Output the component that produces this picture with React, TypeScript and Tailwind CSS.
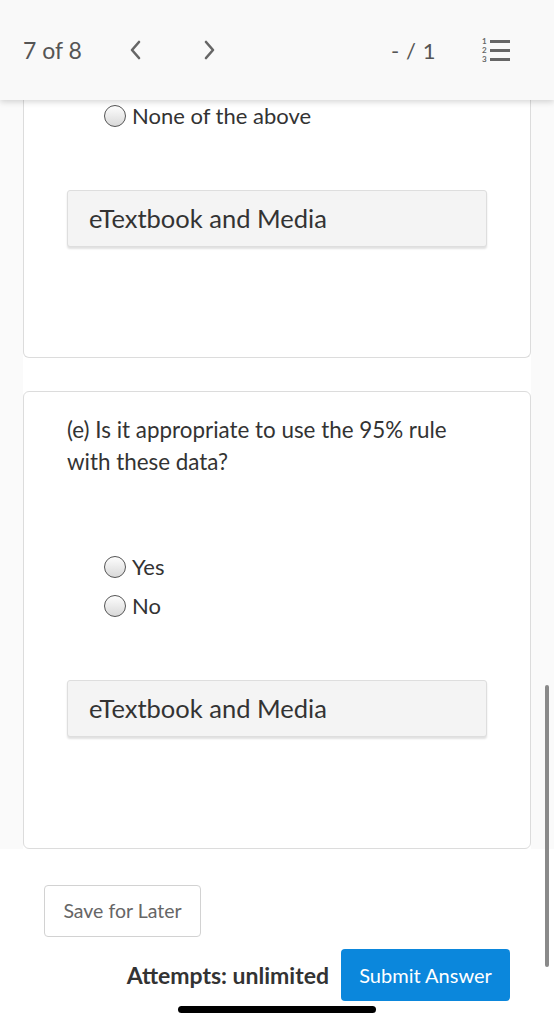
import React from "react";

function Radio({label}: {label: string}) {
    return (
        <label className="flex items-center gap-x-[6px] h-[24px]">
            <span className="w-[22px] h-[22px] rounded-full border-[1.5px] border-[#555] bg-gradient-to-b from-[#fdfdfd] to-[#d9d9d9]"/>
            <span className="text-[22px] text-[#333] leading-none">{label}</span>
        </label>
    )
}

function MediaButton() {
    return (
        <div className="ml-[43px] w-[420px] h-[57px] flex items-center pl-[21px] bg-[#f4f4f4] border border-[#dedede] rounded-[3px] shadow-[0_2px_2px_rgba(0,0,0,0.12)]">
            <span className="text-[25.5px] text-[#333]">eTextbook and Media</span>
        </div>
    )
}

function Chevron({dir}: {dir: "left" | "right"}) {
    return (
        <svg width="14" height="22" viewBox="0 0 14 22" fill="none">
            <polyline
                points={dir === "left" ? "11,3 4,11 11,19" : "3,3 10,11 3,19"}
                stroke="#666" strokeWidth="2.6" strokeLinecap="round" strokeLinejoin="round"/>
        </svg>
    )
}

function ListIcon() {
    return (
        <div className="flex flex-col gap-y-[2px]">
            {["1", "2", "3"].map((n) => (
                <div key={n} className="flex items-center gap-x-[3px]">
                    <span className="text-[8px] leading-[7px] font-bold text-[#666] w-[5px]">{n}</span>
                    <span className="w-[20px] h-[3px] bg-[#666]"/>
                </div>
            ))}
        </div>
    )
}

export default function App() {
    return (
        <div className="relative w-[554px] h-[1024px] overflow-hidden bg-[#fafafa] flex flex-col" style={{fontFamily: "Lato, 'Noto Sans', sans-serif"}}>
            <header className="relative z-10 h-[100px] shrink-0 bg-[#f9f9f9] shadow-[0_2px_6px_rgba(0,0,0,0.16)] flex items-center text-[#555]">
                <span className="ml-[23px] text-[23px]">7 of 8</span>
                <div className="ml-[46px] flex items-center gap-x-[61px]">
                    <Chevron dir="left"/>
                    <Chevron dir="right"/>
                </div>
                <span className="ml-auto text-[22px] tracking-wide">- / 1</span>
                <div className="ml-[46px] mr-[44px]">
                    <ListIcon/>
                </div>
            </header>

            <main className="ml-[23px] w-[508px] bg-white">
                <section className="border border-t-0 border-[#dcdcdc] rounded-b-[6px] pt-[4px] pb-[110px]">
                    <div className="pl-[80px]">
                        <Radio label="None of the above"/>
                    </div>
                    <div className="mt-[62px]">
                        <MediaButton/>
                    </div>
                </section>

                <div className="h-[33px]"/>

                <section className="border border-[#dcdcdc] rounded-[6px] pt-[22px] pb-[111px]">
                    <p className="ml-[43px] text-[22.4px] leading-[32px] text-[#333]">
                        (e) Is it appropriate to use the 95% rule<br/>with these data?
                    </p>
                    <div className="pl-[80px] mt-[77px] flex flex-col gap-y-[15px]">
                        <Radio label="Yes"/>
                        <Radio label="No"/>
                    </div>
                    <div className="mt-[62px]">
                        <MediaButton/>
                    </div>
                </section>
            </main>

            <div className="flex-1 bg-white pl-[44px] pt-[36px] pr-[44px]">
                <button type="button" className="w-[157px] h-[52px] border border-[#d2d2d2] rounded-[4px] bg-white text-[19.5px] text-[#666]">
                    Save for Later
                </button>
                <div className="mt-[12px] flex items-center justify-end gap-x-[12px]">
                    <span className="text-[23px] font-bold text-[#333]">Attempts: unlimited</span>
                    <button type="button" className="w-[169px] h-[52px] rounded-[4px] bg-[#0b87dc] text-[20px] text-white">
                        Submit Answer
                    </button>
                </div>
            </div>

            <div className="absolute right-[5px] top-[685px] w-[4px] h-[282px] rounded-full bg-[#8a8a8a]"/>
            <div className="absolute left-[178px] top-[1006px] w-[198px] h-[7px] rounded-full bg-black"/>
        </div>
    )
}
